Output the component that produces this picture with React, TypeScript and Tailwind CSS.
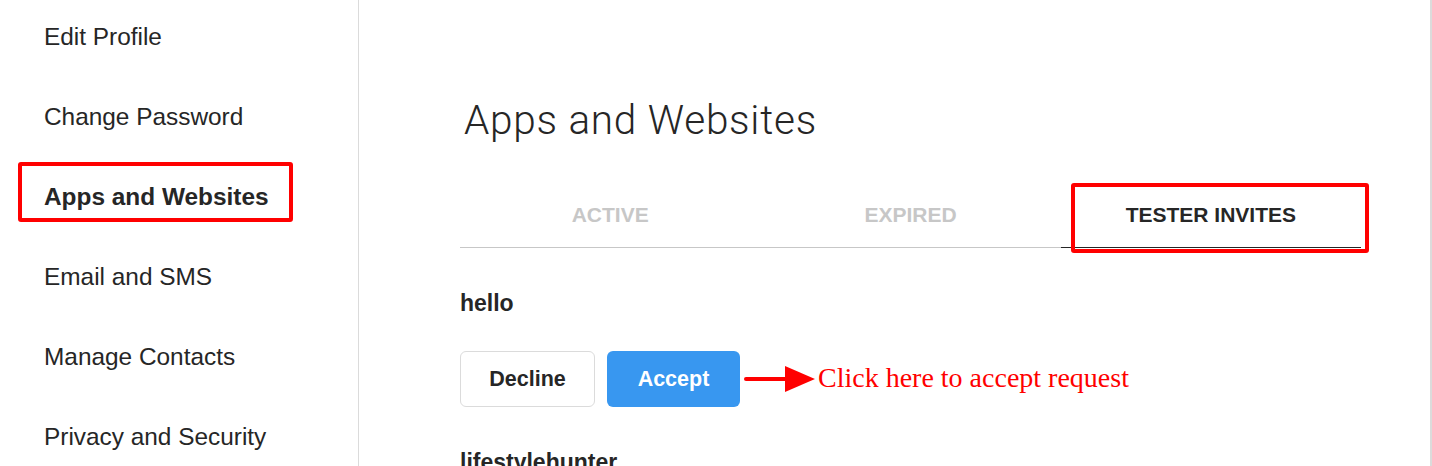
import React from 'react';

const NAV = ['Edit Profile', 'Change Password', 'Apps and Websites', 'Email and SMS', 'Manage Contacts', 'Privacy and Security'];
const TABS = ['ACTIVE', 'EXPIRED', 'TESTER INVITES'];

const Arrow: React.FC = () => (
  <svg width="78" height="30" viewBox="0 0 78 30" className="shrink-0">
    <line x1="6" y1="15" x2="48" y2="15" stroke="#ff0000" strokeWidth="4" strokeLinecap="round" />
    <polygon points="45,2 75,15 45,28" fill="#ff0000" />
  </svg>
);

const App: React.FC = () => {
  return (
    <div className="w-[1432px] h-[466px] overflow-hidden bg-white flex text-[#262626] font-['Liberation_Sans',Arial,sans-serif]">
      <aside className="w-[359px] shrink-0 border-r border-[#dbdbdb] flex flex-col -mt-[3px]">
        {NAV.map((item) => {
          const active = item === 'Apps and Websites';
          return (
            <div key={item} className="relative h-[80px] shrink-0 flex items-center pl-[44px]">
              {active && (
                <div className="absolute left-[18px] top-[5px] w-[275px] h-[60px] border-4 border-[#ff0000] rounded-[3px]" />
              )}
              <span className={`text-[24.4px] leading-[30px] ${active ? 'font-bold' : 'font-normal'}`}>{item}</span>
            </div>
          );
        })}
      </aside>

      <main className="flex-1 border-r-2 border-[#dbdbdb] pl-[101px] pt-[96px] flex flex-col">
        <h1 className="shrink-0 text-[40.5px] leading-[48px] font-light pl-[4px] font-['Roboto','Liberation_Sans',sans-serif] tracking-[0.75px]">
          Apps and Websites
        </h1>

        <div className="shrink-0 mt-[38px] w-[901px] h-[66px] border-b border-[#c7c7c7] flex">
          {TABS.map((tab) => {
            const active = tab === 'TESTER INVITES';
            return (
              <div
                key={tab}
                className={`relative flex-1 flex items-center justify-center text-[21px] font-bold pt-[1px] ${
                  active ? 'text-[#262626] border-b border-[#262626] -mb-px' : 'text-[#c7c7c7]'
                }`}
              >
                {active && (
                  <div className="absolute left-[10px] top-[1px] w-[298px] h-[70px] border-4 border-[#ff0000] rounded-[3px]" />
                )}
                {tab}
              </div>
            );
          })}
        </div>

        <div className="shrink-0 mt-[40px] text-[23px] leading-[30px] font-bold">hello</div>

        <div className="shrink-0 mt-[33px] flex items-center">
          <button className="w-[135px] h-[56px] border border-[#dbdbdb] rounded-[6px] bg-white text-[21.5px] font-bold text-[#262626]">
            Decline
          </button>
          <button className="ml-[12px] w-[133px] h-[56px] rounded-[6px] bg-[#3897f0] text-[21.5px] font-bold text-white">
            Accept
          </button>
          <div className="flex items-center">
            <Arrow />
            <span className="text-[28px] leading-[32px] text-[#ff0000] font-['Liberation_Serif','Times_New_Roman',serif] pb-[2px]">
              Click here to accept request
            </span>
          </div>
        </div>

        <div className="shrink-0 mt-[40px] text-[23px] leading-[30px] font-bold">lifestylehunter</div>
      </main>
    </div>
  );
};

export default App;
